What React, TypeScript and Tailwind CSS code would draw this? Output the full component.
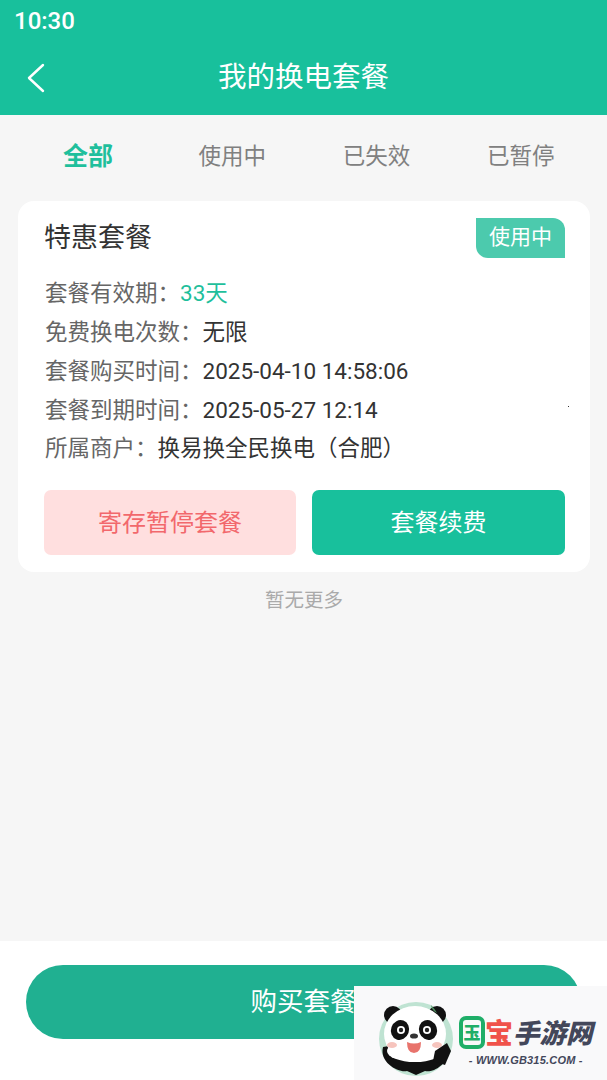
const CJK = 'font-["Roboto","Noto_Sans_CJK_SC",sans-serif]';

const TABS = ['全部', '使用中', '已失效', '已暂停'];

const ROWS = [
  { label: '套餐有效期：', value: '33天', accent: true },
  { label: '免费换电次数：', value: '无限' },
  { label: '套餐购买时间：', value: '2025-04-10 14:58:06' },
  { label: '套餐到期时间：', value: '2025-05-27 12:14' },
  { label: '所属商户：', value: '换易换全民换电（合肥）' },
];

const Panda = () => (
  <svg width="78" height="76" viewBox="0 0 78 76" className="shrink-0">
    <circle cx="39" cy="38" r="37" fill="#bfe3d2" />
    <path d="M6 46 C2 62 22 72 30 70 L39 74 L48 70 C56 72 70 64 72 50 L60 44 L18 44 Z" fill="#111" />
    <circle cx="16" cy="14" r="9" fill="#111" />
    <circle cx="60" cy="14" r="9" fill="#111" />
    <ellipse cx="38" cy="33" rx="31" ry="28" fill="#fff" />
    <ellipse cx="38" cy="50" rx="28" ry="11" fill="#fff" />
    <ellipse cx="23" cy="29" rx="9" ry="10" fill="#111" transform="rotate(20 23 29)" />
    <ellipse cx="51" cy="29" rx="9" ry="10" fill="#111" transform="rotate(-20 51 29)" />
    <circle cx="24" cy="29" r="4" fill="#fff" />
    <circle cx="50" cy="29" r="4" fill="#fff" />
    <circle cx="24" cy="29" r="2.2" fill="#222" />
    <circle cx="50" cy="29" r="2.2" fill="#222" />
    <ellipse cx="37" cy="35" rx="4" ry="2.6" fill="#333" />
    <path d="M30 41 Q37 44 44 41 Q44 52 37 52 Q30 52 30 41 Z" fill="#e8736c" />
    <ellipse cx="15" cy="44" rx="5" ry="3" fill="#f6c4bd" />
    <ellipse cx="60" cy="44" rx="5" ry="3" fill="#f6c4bd" />
    <path d="M58 50 L70 42 L74 50 L68 64 L56 60 Z" fill="#111" />
    <path d="M54 4 Q58 8 60 12 Q55 10 54 4 Z" fill="#4d8a5c" />
  </svg>
);

const Watermark = () => (
  <div className="absolute right-0 bottom-0 flex h-[94px] w-[253px] items-start bg-[#f9f9fa] pt-[15px] pl-[23px]">
    <Panda />
    <div className="relative ml-[4px] flex flex-col items-center">
      <div className="mt-[13px] flex h-[36px] items-center">
        <span className='flex h-[33px] w-[26px] items-center justify-center rounded-[7px] border-[4px] border-[#1fae68] font-["Noto_Sans_CJK_SC",sans-serif] text-[17px] font-black text-[#1fae68]'>
          玉
        </span>
        <span className='font-["Noto_Sans_CJK_SC",sans-serif] text-[28px] leading-[36px] font-black text-[#f0524a]'>
          宝
        </span>
        <span className='font-["Noto_Sans_CJK_SC",sans-serif] text-[26.5px] leading-[36px] font-black text-[#43475a] italic'>
          手游网
        </span>
      </div>
      <span className='mt-[2px] font-["Liberation_Sans",sans-serif] text-[11px] font-bold tracking-[0.2px] whitespace-nowrap text-[#43475a] italic'>
        - WWW.GB315.COM -
      </span>
    </div>
  </div>
);

export default function App() {
  return (
    <div className={`relative flex h-[1080px] w-[607px] flex-col overflow-hidden bg-[#f6f6f6] ${CJK}`}>
      {/* Шапка */}
      <header className="h-[115px] shrink-0 bg-[#18c09c] text-white">
        <div className="flex h-[42px] items-center pl-[14px] text-[24px] leading-none font-medium">10:30</div>
        <div className="relative flex h-[73px] items-center justify-center text-[28.5px]">
          <svg width="20" height="30" viewBox="0 0 20 30" fill="none" className="absolute top-[21px] left-[26px]">
            <path d="M17 2 L3 15 L17 28" stroke="#fff" strokeWidth="2.4" strokeLinecap="round" strokeLinejoin="round" />
          </svg>
          我的换电套餐
        </div>
      </header>

      {/* Табы */}
      <nav className="grid h-[86px] shrink-0 grid-cols-4 pr-[14px] pb-[2px] pl-[16px]">
        {TABS.map((t, i) => (
          <div
            key={t}
            className={
              i === 0
                ? 'flex items-center justify-center text-[25px] font-bold text-[#1fbf9c]'
                : 'flex items-center justify-center text-[22.5px] text-[#808080]'
            }
          >
            {t}
          </div>
        ))}
      </nav>

      {/* Карточка */}
      <section className="relative mr-[17px] ml-[18px] h-[371px] shrink-0 rounded-[16px] bg-white pt-[17px] pr-[25px] pl-[26px]">
        <div className="flex items-start justify-between">
          <h2 className="text-[27px] leading-[40px] font-normal text-[#333]">特惠套餐</h2>
          <span className="flex h-[40px] w-[89px] items-center justify-center rounded-tr-[12px] rounded-bl-[12px] bg-[#4ccaad] text-[21px] text-white">
            使用中
          </span>
        </div>
        <div className="mt-[17px] flex flex-col pl-[1px]">
          {ROWS.map((r) => (
            <div key={r.label} className="flex h-[38.7px] items-center text-[22.5px] whitespace-nowrap">
              <span className="text-[#666]">{r.label}</span>
              <span className={r.accent ? 'text-[#1fbf9c]' : 'text-[#333]'}>{r.value}</span>
            </div>
          ))}
        </div>
        <div className="mt-[22px] grid grid-cols-[252px_253px] gap-[16px]">
          <button className="h-[65px] rounded-[7px] bg-[#ffdfdf] text-[24px] text-[#f2686c]">寄存暂停套餐</button>
          <button className="h-[65px] rounded-[7px] bg-[#18c09c] text-[24px] text-white">套餐续费</button>
        </div>
        <span className="absolute top-[205px] right-[21px] h-[1px] w-[1px] bg-[#333]" />
      </section>

      <p className="mt-[17px] pl-[1px] text-center text-[19.5px] leading-[24px] text-[#aaa]">暂无更多</p>

      {/* Низ */}
      <footer className="mt-auto flex h-[139px] shrink-0 items-start bg-white px-[26px] pt-[24px]">
        <button className="h-[74px] w-full rounded-full bg-[#20b091] text-[26.5px] text-white">购买套餐</button>
      </footer>

      <Watermark />
    </div>
  );
}
